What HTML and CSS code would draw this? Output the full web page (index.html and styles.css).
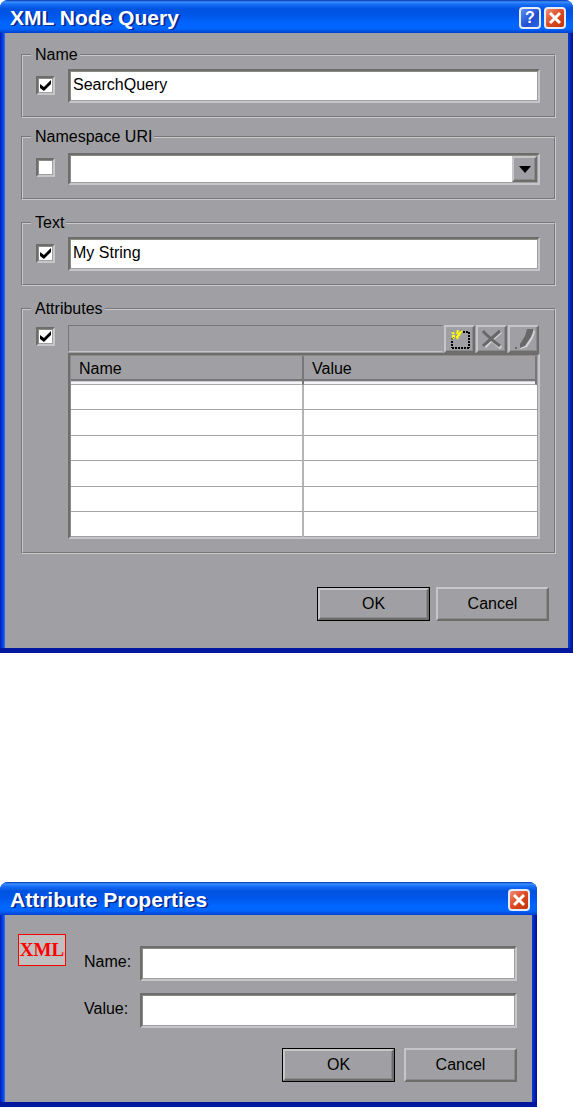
FILE: index.html
```html
<!DOCTYPE html>
<html lang="en">
<head>
    <meta charset="UTF-8">
    <meta name="viewport" content="width=device-width, initial-scale=1.0">
    <title>XML Node Query</title>
    <link rel="stylesheet" href="styles.css">
</head>
<body>
    <form class="dialog">
        <header class="titlebar">
            <h1>XML Node Query</h1>
            <button type="button" class="title-btn help" aria-label="Help">?</button>
            <button type="button" class="title-btn close" aria-label="Close">
                <svg width="14" height="14" viewBox="0 0 14 14"><path d="M2 2L12 12M12 2L2 12"/></svg>
            </button>
        </header>
        <div class="dialog-body query">
            <div class="pair">
                <fieldset>
                    <legend>Name</legend>
                    <div class="row">
                        <input type="checkbox" class="check" aria-label="Match name" checked>
                        <input type="text" class="text" aria-label="Name" value="SearchQuery">
                    </div>
                </fieldset>
                <fieldset>
                    <legend>Namespace URI</legend>
                    <div class="row">
                        <input type="checkbox" class="check" aria-label="Match namespace URI">
                        <div class="combo">
                            <select aria-label="Namespace URI"><option></option></select>
                            <span class="arrow"><svg width="12" height="7" viewBox="0 0 12 7"><path d="M0 0H12L6 7Z"/></svg></span>
                        </div>
                    </div>
                </fieldset>
            </div>
            <fieldset>
                <legend>Text</legend>
                <div class="row">
                    <input type="checkbox" class="check" aria-label="Match text" checked>
                    <input type="text" class="text" aria-label="Text" value="My String">
                </div>
            </fieldset>
            <fieldset>
                <legend>Attributes</legend>
                <div class="row attributes">
                    <input type="checkbox" class="check" aria-label="Match attributes" checked>
                    <div class="list">
                        <div class="toolbar">
                            <div class="strip"></div>
                            <button type="button" class="tool" aria-label="New attribute">
                                <svg width="22" height="22" viewBox="0 0 22 22">
                                    <path d="M11 4H20M20 4V20M3 20H20M3 10V20" fill="none" stroke="#000" stroke-width="2" stroke-dasharray="2 1"/>
                                    <path d="M3 4L5 6M9 2L8 6M13 3L9 7M3 8H6M11 6L8 9L9 11M5 9L3 11" fill="none" stroke="#ff0" stroke-width="2"/>
                                    <path d="M2 2L4 4M13 1L11 3M2 12L5 9" fill="none" stroke="#85857a" stroke-width="1"/>
                                </svg>
                            </button>
                            <button type="button" class="tool" aria-label="Delete attribute">
                                <svg width="22" height="22" viewBox="0 0 22 22">
                                    <path d="M3 4Q9 11 20 20M20 4Q12 10 4 19" fill="none" stroke="#d2d2d4" stroke-width="3"/>
                                    <path d="M2 3Q8 10 19 18M19 3Q12 9 2 18" fill="none" stroke="#68686a" stroke-width="3"/>
                                </svg>
                            </button>
                            <button type="button" class="tool" aria-label="Edit attribute">
                                <svg width="22" height="22" viewBox="0 0 22 22">
                                    <path d="M21 2L22 4L20 10L14 19L8 21L7 20Z" fill="#d2d2d4"/>
                                    <path d="M14 1H20L20 4L18 9L12 18L7 20L7 16L12 8ZM2 19H4V21H2Z" fill="#68686a"/>
                                </svg>
                            </button>
                        </div>
                        <div class="table-frame">
                            <table>
                                <thead>
                                    <tr><th>Name</th><th>Value</th></tr>
                                </thead>
                                <tbody>
                                    <tr><td></td><td></td></tr>
                                    <tr><td></td><td></td></tr>
                                    <tr><td></td><td></td></tr>
                                    <tr><td></td><td></td></tr>
                                    <tr><td></td><td></td></tr>
                                    <tr><td></td><td></td></tr>
                                </tbody>
                            </table>
                        </div>
                    </div>
                </div>
            </fieldset>
            <div class="buttons">
                <button type="button" class="btn default">OK</button>
                <button type="button" class="btn">Cancel</button>
            </div>
        </div>
    </form>

    <form class="dialog small">
        <header class="titlebar">
            <h1>Attribute Properties</h1>
            <button type="button" class="title-btn close" aria-label="Close">
                <svg width="14" height="14" viewBox="0 0 14 14"><path d="M2 2L12 12M12 2L2 12"/></svg>
            </button>
        </header>
        <div class="dialog-body properties">
            <div class="columns">
                <div class="xml-icon">XML</div>
                <div class="fields">
                    <label for="attr-name">Name:</label>
                    <input type="text" class="text" id="attr-name">
                    <label for="attr-value">Value:</label>
                    <input type="text" class="text" id="attr-value">
                </div>
            </div>
            <div class="buttons">
                <button type="button" class="btn default">OK</button>
                <button type="button" class="btn">Cancel</button>
            </div>
        </div>
    </form>
</body>
</html>
```
FILE: styles.css
```css
* { box-sizing: border-box; }
body {
    margin: 0;
    background-color: #fff;
    color: #000;
    font: 16px/18px "Liberation Sans", Arial, sans-serif;
}
input, select, button { font: inherit; color: inherit; border-radius: 0; margin: 0; }
svg { display: block; }

/* Window frame */
.dialog {
    background: linear-gradient(to right, #0018c0, #0a58ee 4px, #3a78e8 5px, #0a3cd8 calc(100% - 5px), #000f90);
    border-radius: 8px 8px 0 0;
    padding-bottom: 5px;
    box-shadow: inset 0 -5px #0018a0;
    overflow: hidden;
}
.dialog.small { margin: 229px 36px 0 0; }
.titlebar {
    display: flex;
    align-items: center;
    gap: 3px;
    height: 33px;
    padding: 2px 7px 0 10px;
    background: linear-gradient(#0831b0, #3a92ff 2px, #1a70f8 4px, #0053e0 9px, #0055e8 15px, #0066ff 24px, #0064fc 29px, #0040c8);
}
.titlebar h1 {
    flex: 1;
    margin: 0;
    color: #fff;
    font-size: 21px;
    line-height: 24px;
    font-weight: bold;
    text-shadow: 2px 1px #0a2a90;
}
.title-btn {
    display: flex;
    align-items: center;
    justify-content: center;
    width: 22px;
    height: 22px;
    padding: 0;
    border: 2px solid #e4ebfb;
    border-radius: 4px;
    color: #fff;
    font-size: 16px;
    font-weight: bold;
}
.help { background: linear-gradient(135deg, #5a8cf4, #2050d0 60%, #2c68ea); }
.close { background: linear-gradient(135deg, #f09078, #dc4a22 50%, #c03408); }
.close svg { fill: none; stroke: #fff; stroke-width: 3; }
.dialog-body {
    margin: 0 5px;
    background-color: #a0a0a4;
}

/* Group boxes */
.query { padding: 13px 12px 27px 16px; }
.pair { display: flex; flex-direction: column; gap: 10px; margin-bottom: 14px; }
fieldset {
    min-width: 0;
    margin: 0;
    padding: 5px 14px 13px 8px;
    border: 2px groove #cacacc;
}
.query > fieldset + fieldset { margin-top: 14px; }
legend { padding: 0 2px 0 4px; }
.row {
    display: flex;
    align-items: flex-end;
    gap: 13px;
    min-height: 34px;
    padding-left: 5px;
}

/* Sunken controls */
.text, .combo, .check, .table-frame {
    border: 2px solid;
    border-color: #6e6d6c #c6c6c8 #c6c6c8 #6e6d6c;
    background-color: #fff;
    box-shadow: inset 1px 1px #8c8b86, inset -1px -1px #a0a0a4;
}
.text {
    flex: 1;
    min-width: 0;
    width: 100%;
    height: 34px;
    padding: 0 4px 3px 3px;
    outline: none;
}
.check {
    appearance: none;
    flex: none;
    width: 19px;
    height: 19px;
    margin-bottom: 8px;
}
.check:checked::before {
    content: "";
    display: block;
    width: 11px;
    height: 11px;
    margin: 2px;
    background-color: #000;
    clip-path: polygon(0 36%, 36% 64%, 100% 0, 100% 36%, 36% 100%, 0 73%);
}
.combo { display: flex; flex: 1; height: 32px; position: relative; }
.combo select {
    appearance: none;
    flex: 1;
    border: 0;
    background: transparent;
    outline: none;
}
.combo .arrow {
    position: absolute;
    top: 1px;
    right: 1px;
    bottom: 1px;
    width: 25px;
    display: flex;
    align-items: center;
    justify-content: center;
    pointer-events: none;
}

/* Raised controls */
.btn, .tool, .arrow {
    background-color: #a0a0a4;
    border: 2px solid;
    border-color: #c6c6c8 #6e6d6c #6e6d6c #c6c6c8;
    box-shadow: inset -1px -1px #8a8a8c;
}
.buttons { display: flex; justify-content: flex-end; }
.btn { width: 113px; height: 34px; padding: 0; }
.btn.default { outline: 1px solid #000; outline-offset: -1px; border-width: 3px; }

/* Attribute list */
.attributes { align-items: flex-start; padding-top: 2px; }
.attributes .check { margin-top: 2px; }
.list { flex: 1; min-width: 0; }
.toolbar { display: flex; height: 28px; gap: 1px; padding-right: 1px; }
.strip {
    flex: 1;
    border: 1px solid;
    border-color: #77777a #a0a0a4 #c6c6c8 #77777a;
    margin-bottom: 1px;
}
.tool { display: flex; align-items: center; justify-content: center; width: 31px; padding: 0; }
.table-frame { height: 186px; padding: 1px; }
table { width: 100%; border-collapse: separate; border-spacing: 0; table-layout: fixed; }
th {
    height: 29px;
    padding: 0 8px 3px;
    background-color: #a0a0a4;
    border-right: 2px solid #77777a;
    border-bottom: 1px solid #a9a9ac;
    box-shadow: inset 0 -2px #f4f4f6, inset 0 -3px #d0d0d2, inset 0 -5px #77777a;
    font-weight: normal;
    text-align: left;
}
td { height: 25px; padding: 0; border-bottom: 1px solid #a4a4a6; }
td:first-child { border-right: 2px solid #b4b4b6; }
tbody tr:nth-child(even) td { height: 26px; }
tbody tr:last-child td { height: 25px; border-bottom: 0; }

.query .buttons { gap: 6px; margin: 33px 7px 0 0; }

/* Attribute properties */
.properties { padding: 19px 15px 20px 13px; }
.columns { display: flex; gap: 18px; }
.xml-icon {
    width: 48px;
    height: 32px;
    border: 1px solid #f00;
    background-color: #c0c0c0;
    color: #f00;
    font: bold 19px/30px "Liberation Serif", "Times New Roman", serif;
    text-align: center;
}
.fields {
    flex: 1;
    display: grid;
    grid-template-columns: 56px 1fr;
    align-items: center;
    row-gap: 12px;
    padding-top: 12px;
}
.fields label { padding-bottom: 4px; }
.fields .text { height: 35px; }
.properties .buttons { gap: 9px; margin-top: 20px; }
```
